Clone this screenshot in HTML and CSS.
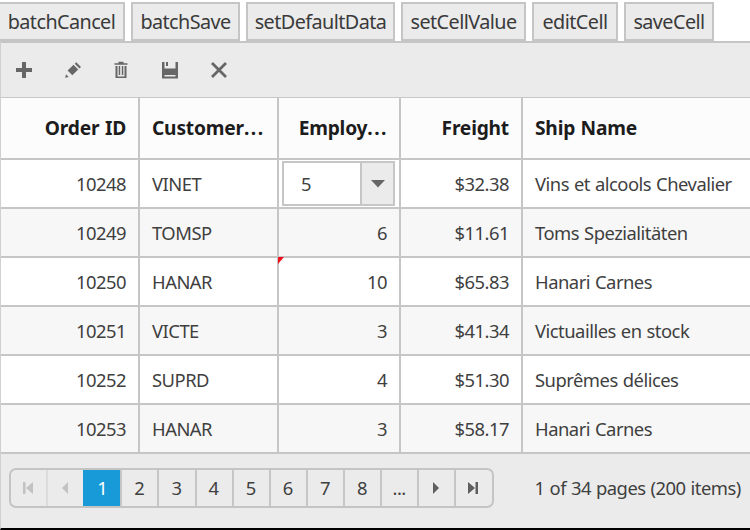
FILE: index.html
```html
<!DOCTYPE html>
<html lang="en">
<head>
<meta charset="utf-8">
<title>Orders</title>
<link rel="stylesheet" href="styles.css">
</head>
<body>
<div class="actions">
  <button class="b-cancel">batchCancel</button>
  <button class="b-save">batchSave</button>
  <button class="b-default">setDefaultData</button>
  <button class="b-value">setCellValue</button>
  <button class="b-edit">editCell</button>
  <button class="b-savecell">saveCell</button>
</div>
<div class="grid">
  <div class="toolbar">
    <svg viewBox="0 0 18 18"><path d="M7 1h4v6h6v4h-6v6H7v-6H1V7h6z"/></svg>
    <svg viewBox="0 0 18 18"><path d="M3.6 9.5 9.5 3.8 14.2 8.500 8.300 14.200zM10.700 2.800 12.200 1.300 17 6 15.500 7.500zM1.200 16.800 2 13.300 4.700 16z"/></svg>
    <svg viewBox="0 0 18 18"><path d="M6.500 .8h5v1.400h4v1.500h-13V2.200h4zM3.500 5h2v10.500h7V5h2v12h-11zM6.700 5h1.500v9H6.700zM9.800 5h1.500v9H9.800z"/></svg>
    <svg viewBox="0 0 18 18"><path fill-rule="evenodd" d="M1 1h2.500v6.500h11V1H17v16.500H1zM3.500 14v1.500h11V14zM5 1h2v4H5z"/></svg>
    <svg viewBox="0 0 18 18"><path class="cross" d="m2 2 14 14M16 2 2 16"/></svg>
  </div>
  <table>
    <colgroup><col class="c1"><col class="c2"><col class="c3"><col class="c4"><col class="c5"></colgroup>
    <thead>
      <tr><th class="num">Order ID</th><th>Customer<span class="dots">...</span></th><th class="num trimmed">Employ<span class="dots">...</span></th><th class="num">Freight</th><th>Ship Name</th></tr>
    </thead>
    <tbody>
      <tr><td class="num">10248</td><td>VINET</td><td class="editing"><div class="dropdown"><span>5</span><i><svg viewBox="0 0 14 8"><path d="M0 0h14L7 7.500z"/></svg></i></div></td><td class="num">$32.38</td><td>Vins et alcools Chevalier</td></tr>
      <tr><td class="num">10249</td><td>TOMSP</td><td class="num">6</td><td class="num">$11.61</td><td>Toms Spezialitäten</td></tr>
      <tr><td class="num">10250</td><td>HANAR</td><td class="num changed">10</td><td class="num">$65.83</td><td>Hanari Carnes</td></tr>
      <tr><td class="num">10251</td><td>VICTE</td><td class="num">3</td><td class="num">$41.34</td><td>Victuailles en stock</td></tr>
      <tr><td class="num">10252</td><td>SUPRD</td><td class="num">4</td><td class="num">$51.30</td><td>Suprêmes délices</td></tr>
      <tr><td class="num">10253</td><td>HANAR</td><td class="num">3</td><td class="num">$58.17</td><td>Hanari Carnes</td></tr>
    </tbody>
  </table>
  <div class="pager">
    <div class="pages">
      <span class="off"><svg viewBox="0 0 12 14"><path d="M1 1h2.500v12H1zM11 1v12L4 7z"/></svg></span>
      <span class="off"><svg viewBox="0 0 12 14"><path d="M9 1v12L3 7z"/></svg></span>
      <span class="current">1</span><span>2</span><span>3</span><span>4</span><span>5</span><span>6</span><span>7</span><span>8</span><span class="more">...</span>
      <span><svg viewBox="0 0 12 14"><path d="M3 1v12l6-6z"/></svg></span>
      <span><svg viewBox="0 0 12 14"><path d="M1 1v12l7-6zM8.500 1H11v12H8.500z"/></svg></span>
    </div>
    <div class="summary">1 of 34 pages (200 items)</div>
  </div>
</div>
</body>
</html>
```
FILE: styles.css
```css
* { box-sizing: border-box; }

body {
  margin: 0;
  height: 530px;
  overflow: hidden;
  background: #fff;
  color: #3f3f3f;
  font: 18.4px "Noto Sans", "Open Sans", sans-serif;
  letter-spacing: -0.5px;
  word-spacing: 0.7px;
}

.actions {
  display: flex;
  gap: 6px;
  height: 41px;
  padding-top: 2px;
}

.actions button {
  height: 39px;
  padding: 0 0 1px;
  border: 2px solid #c5c5c5;
  background: #ebebeb;
  color: #3a3a3a;
  font: 19.8px "Noto Sans", "Open Sans", sans-serif;
  letter-spacing: -0.56px;
}

.b-cancel { width: 127px; margin-left: -2px; }
.b-save { width: 109px; }
.b-default { width: 149px; }
.b-value { width: 125px; }
.b-edit { width: 86px; }
.b-savecell { width: 90px; }

.grid {
  height: 489px;
  border-left: 1px solid #d0d0d0;
  border-bottom: 2px solid #000;
  background: #ebebeb;
}

.toolbar {
  display: flex;
  align-items: center;
  gap: 30.700px;
  height: 57px;
  padding-left: 14px;
  border-top: 2px solid #c5c5c5;
  border-bottom: 1px solid #c8c8c8;
}

.toolbar svg {
  width: 18px;
  height: 18px;
  fill: #666;
}

.cross {
  fill: none;
  stroke: #666;
  stroke-width: 2.800;
}

table {
  width: 749px;
  table-layout: fixed;
  border-collapse: separate;
  border-spacing: 0;
}

.c1 { width: 139px; }
.c2 { width: 139px; }
.c3 { width: 122px; }
.c4 { width: 122px; }
.c5 { width: 227px; }

th, td {
  height: 49px;
  padding: 0 0 1px 12px;
  border-right: 2px solid #c6c6c6;
  border-bottom: 2px solid #c6c6c6;
  background: #fff;
  text-align: left;
  white-space: nowrap;
}

th:last-child, td:last-child { border-right: 0; }

th {
  height: 62px;
  background: #fcfcfc;
  color: #1c1c1c;
  font-size: 19.2px;
  font-weight: 700;
  letter-spacing: -0.2px;
}

.dots { letter-spacing: 1.500px; }

tbody tr:nth-child(even) td { background: #f7f7f7; }

.num {
  padding: 0 12px 1px 0;
  text-align: right;
}

.trimmed { padding-right: 11px; }

.editing { padding: 0 4px 0 3px; }

.dropdown {
  display: flex;
  height: 45px;
  border: 2px solid #c6c6c6;
}

.dropdown span {
  flex: 1;
  padding-left: 17px;
  line-height: 41px;
}

.dropdown i {
  display: flex;
  align-items: center;
  justify-content: center;
  width: 33px;
  border-left: 2px solid #c6c6c6;
  background: #ebebeb;
}

.dropdown svg {
  width: 14px;
  height: 8px;
  fill: #666;
}

.changed { position: relative; }

.changed::before {
  content: "";
  position: absolute;
  top: -1px;
  left: -1px;
  border-top: 7px solid #f0101c;
  border-right: 6px solid transparent;
}

.pager {
  display: flex;
  height: 74px;
  padding: 14px 0 0 8px;
}

.pages {
  display: flex;
  width: 484.500px;
  height: 40px;
  border: 2px solid #c4c4c4;
  border-radius: 7px;
}

.pages span {
  display: flex;
  flex: 1;
  align-items: center;
  justify-content: center;
  padding: 0 1px 2px 0;
  border-left: 2px solid #c6c6c6;
}

.pages span:first-child { border-left: 0; }
.pages span.off { border-color: #dcdcdc; }

.pages span.current {
  border-color: #189ad8;
  background: #189ad8;
  color: #fff;
}

.pages svg {
  width: 12px;
  height: 14px;
  margin-top: 2px;
  fill: #5f5f5f;
}

.pages .off svg { fill: #c2c2c2; }

.summary {
  padding-left: 41px;
  line-height: 39px;
  white-space: nowrap;
  letter-spacing: -0.5px;
}
```
